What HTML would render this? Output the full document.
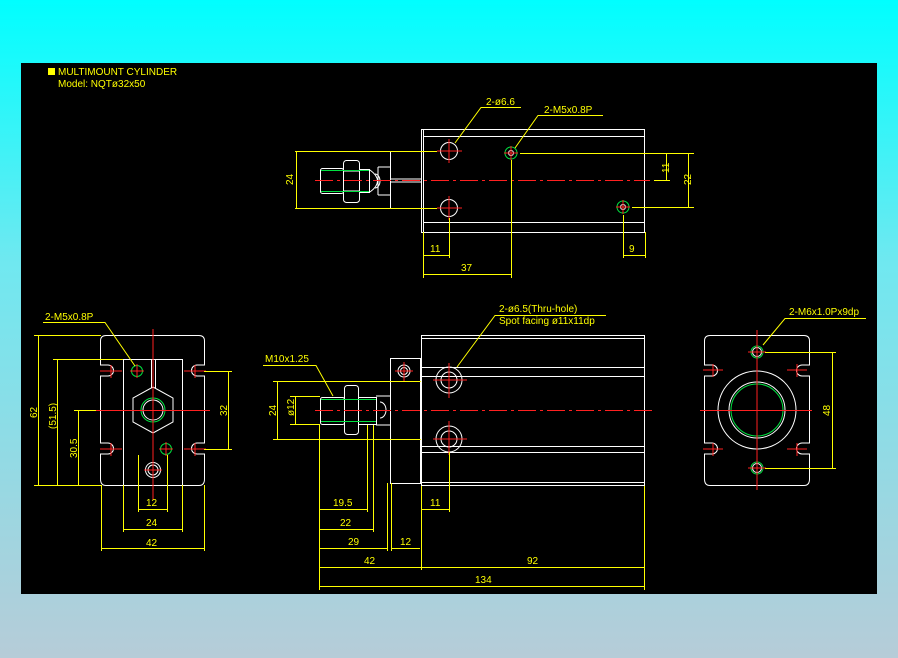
<!DOCTYPE html>
<html><head><meta charset="utf-8"><style>
html,body{margin:0;padding:0;width:898px;height:658px;overflow:hidden;background:linear-gradient(#00ffff 0%,#70e8f0 40%,#b6ccd8 100%);}
svg{position:absolute;left:0;top:0}
text{font-family:"Liberation Sans",sans-serif;font-size:10px;fill:#ffff00}
.y{stroke:#ffff00;fill:none;stroke-width:1}
.w{stroke:#fff;fill:none;stroke-width:1}
.r{stroke:#ff2020;fill:none;stroke-width:1}
.g{stroke:#00e040;fill:none;stroke-width:1}
.c{stroke:#ff2020;fill:none;stroke-width:1;stroke-dasharray:18 4 3 4}
</style></head><body>
<svg width="898" height="658" viewBox="0 0 898 658">
<rect x="21" y="63" width="856" height="531" fill="#000"/>
<rect x="48" y="68" width="7" height="7" fill="#ffff00"/>
<text x="58" y="75" font-size="9">MULTIMOUNT CYLINDER</text>
<text x="58" y="87" font-size="9">Model: NQTø32x50</text>

<!-- TOP VIEW -->
<rect class="w" x="421.5" y="129.5" width="223" height="103"/>
<line class="w" x1="423" y1="136.5" x2="644" y2="136.5"/>
<line class="w" x1="423" y1="222.5" x2="644" y2="222.5"/>
<line class="w" x1="423.5" y1="130" x2="423.5" y2="232"/>
<path class="w" d="M390.5 151.5H421.5M390.5 208.5H421.5M390.5 151.5V208.5M390.5 167H378M390.5 195H378M378 167V195M390 179H421M390 182H421"/>
<rect class="w" x="343.5" y="160.5" width="16" height="42" rx="3"/>
<line class="w" x1="343" y1="171" x2="359" y2="171"/><line class="w" x1="343" y1="191" x2="359" y2="191"/>
<rect class="w" x="320.5" y="168.5" width="23" height="25" rx="2"/>
<rect class="w" x="359.5" y="169.5" width="10" height="23"/>
<line class="g" x1="321" y1="170.5" x2="369" y2="170.5"/><line class="g" x1="321" y1="191.5" x2="369" y2="191.5"/>
<path class="w" d="M370 170 Q385 181 370 192 M375 174 A5 7 0 0 1 375 188"/>
<line class="c" x1="315" y1="180.5" x2="650" y2="180.5"/>
<circle class="w" cx="449" cy="151" r="8.5"/><circle class="w" cx="449" cy="208" r="8.5"/>
<path class="r" d="M437 151H462M449 139V163M437 208H462M449 196V220"/>
<circle class="g" cx="511" cy="153" r="6"/><circle class="w" cx="511" cy="153" r="2.5"/>
<circle class="g" cx="623" cy="207" r="6"/><circle class="w" cx="623" cy="207" r="2.5"/>
<path class="r" d="M504 153H518M511 146V160M616 207H630M623 200V214"/>
<text x="486" y="105">2-ø6.6</text>
<path class="y" d="M521 107.5H481L455 143"/>
<text x="544" y="113">2-M5x0.8P</text>
<path class="y" d="M603 115.5H538L515 148"/>
<path class="y" d="M295 151.5H437M295 208.5H437M296.5 151V208"/>
<text transform="translate(293,185) rotate(-90)">24</text>
<path class="y" d="M520 153.5H694M632 207.5H694M654 180.5H670M666.5 153V180M688.5 153V207"/>
<text transform="translate(669,173) rotate(-90)">11</text>
<text transform="translate(691,185) rotate(-90)">22</text>
<path class="y" d="M423.5 232V278M449.5 218V258M511.5 160V278M623.5 215V258M645.5 232V258M423 255.5H449M623 255.5H645M423 274.5H511"/>
<text x="430" y="252">11</text><text x="629" y="252">9</text><text x="461" y="271">37</text>

<!-- LEFT VIEW -->
<path class="w" d="M106 335.5H199Q204.5 335.5 204.5 341V365H197A5 5 0 0 0 197 376H204.5V443H197A5 5 0 0 0 197 454H204.5V479Q204.5 485.5 199 485.5H106Q100.5 485.5 100.5 479V454H108A5 5 0 0 0 108 443H100.5V376H108A5 5 0 0 0 108 365H100.5V341Q100.5 335.5 106 335.5Z"/>
<path class="w" d="M123.5 485V359.5H182.5V485M151.5 359V388M155.5 359V388"/>
<path class="w" d="M153 387L173 398V422L153 433L133 422V398Z"/>
<circle class="g" cx="153" cy="410" r="12"/><circle class="w" cx="153" cy="410" r="10"/>
<circle class="g" cx="137" cy="371" r="5.5"/><circle class="g" cx="166" cy="449" r="5.5"/>
<circle class="w" cx="153" cy="470" r="7.5"/><circle class="w" cx="153" cy="470" r="5"/>
<path class="r" d="M153 329V500M96 410.5H210M100 371H122M111 365V378M184 371H206M195 365V378M100 449H122M111 443V456M184 449H206M195 443V456M130 371H144M137 364V378M159 449H173M166 442V456M144 470H162"/>
<text x="45" y="320">2-M5x0.8P</text>
<path class="y" d="M43 322.5H105L135 366"/>
<path class="y" d="M34 335.5H101M53 359.5H123M74 410.5H96M34 485.5H101M38.5 335V485M57.5 359V485M78.5 410V485"/>
<text transform="translate(37,418) rotate(-90)">62</text>
<text transform="translate(56,429) rotate(-90)">(51.5)</text>
<text transform="translate(77,458) rotate(-90)">30.5</text>
<path class="y" d="M204 371.5H232M204 449.5H232M228.5 371V449"/>
<text transform="translate(227,416) rotate(-90)">32</text>
<path class="y" d="M138.5 455V512M167.5 455V512M123.5 485V532M182.5 485V532M101.5 485V551M204.5 485V551M138 509.5H167M123 529.5H182M101 548.5H204"/>
<text x="146" y="506">12</text><text x="146" y="526">24</text><text x="146" y="546">42</text>

<!-- FRONT VIEW -->
<rect class="w" x="421.5" y="335.5" width="223" height="150"/>
<path class="w" d="M422 338.5H644M422 367.5H644M422 376.5H644M422 446.5H644M422 452.5H644M422 482.5H644"/>
<rect class="w" x="390.5" y="358.5" width="30" height="125"/>
<circle class="w" cx="404" cy="371" r="6"/><circle class="w" cx="404" cy="371" r="3.5"/>
<circle class="w" cx="449" cy="380" r="13"/><circle class="w" cx="449" cy="380" r="8"/>
<circle class="w" cx="449" cy="439" r="13"/><circle class="w" cx="449" cy="439" r="8"/>
<path class="r" d="M433 380H467M449 363V398M433 439H467M449 421V455M395 371H413M404 362V381"/>
<rect class="w" x="344.5" y="385.5" width="14" height="49" rx="3"/>
<rect class="w" x="320.5" y="397.5" width="24" height="27" rx="2"/>
<rect class="w" x="358.5" y="397.5" width="18" height="27"/>
<line class="g" x1="321" y1="399.5" x2="376" y2="399.5"/><line class="g" x1="321" y1="421.5" x2="376" y2="421.5"/>
<path class="w" d="M376 396H390M376 425H390M380 402A6 8 0 0 1 380 418"/>
<line class="c" x1="315" y1="410.5" x2="655" y2="410.5"/>
<text x="265" y="362">M10x1.25</text>
<path class="y" d="M263 365.5H316L333 396"/>
<text x="499" y="312">2-ø6.5(Thru-hole)</text>
<text x="499" y="324">Spot facing ø11x11dp</text>
<path class="y" d="M606 315.5H495L457 367"/>
<path class="y" d="M273 381.5H421M273 439.5H421M277.5 381V439M290 396.5H320M290 424.5H320M295.5 396V424"/>
<text transform="translate(276,416) rotate(-90)">24</text>
<text transform="translate(294,416) rotate(-90)">ø12</text>
<path class="y" d="M319.5 425V590M367.5 425V512M373.5 425V532M387.5 483V551M391.5 483V551M421.5 486V570M449.5 452V512M644.5 486V590"/>
<path class="y" d="M320 509.5H367M320 529.5H373M320 548.5H387M391 548.5H420M422 509.5H449M320 567.5H421M421 567.5H644M320 586.5H644"/>
<text x="333" y="506">19.5</text><text x="340" y="526">22</text><text x="348" y="545">29</text>
<text x="400" y="545">12</text><text x="430" y="506">11</text><text x="364" y="564">42</text>
<text x="527" y="564">92</text><text x="475" y="583">134</text>

<!-- RIGHT VIEW -->
<path class="w" d="M710 335.5H804Q809.5 335.5 809.5 341V365H802A5 5 0 0 0 802 376H809.5V443H802A5 5 0 0 0 802 454H809.5V479Q809.5 485.5 804 485.5H710Q704.5 485.5 704.5 479V454H712A5 5 0 0 0 712 443H704.5V376H712A5 5 0 0 0 712 365H704.5V341Q704.5 335.5 710 335.5Z"/>
<circle class="w" cx="757" cy="410" r="39"/>
<circle class="w" cx="757" cy="410" r="28"/>
<circle class="g" cx="757" cy="410" r="26"/>
<circle class="g" cx="757" cy="352" r="6"/><circle class="w" cx="757" cy="352" r="4.5"/>
<circle class="g" cx="757" cy="468" r="6"/><circle class="w" cx="757" cy="468" r="4.5"/>
<path class="r" d="M757 330V490M700 410.5H812M703 370H723M713 364V377M787 370H807M797 364V377M703 449H723M713 443V456M787 449H807M797 443V456M748 352H766M748 468H766"/>
<text x="789" y="315">2-M6x1.0Px9dp</text>
<path class="y" d="M866 318.5H785L763 345M765 352.5H836M765 468.5H836M832.5 352V468"/>
<text transform="translate(830,416) rotate(-90)">48</text>
</svg>
</body></html>
